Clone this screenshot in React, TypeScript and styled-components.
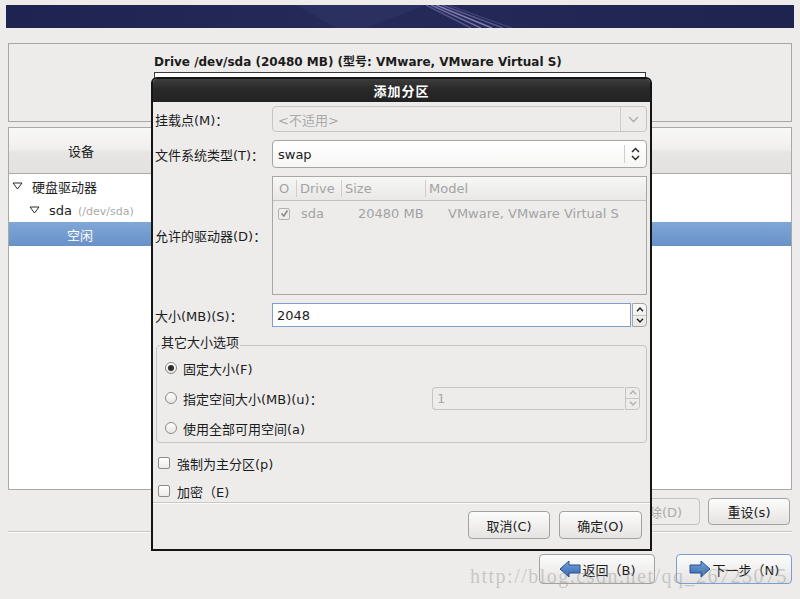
import React from 'react';
import styled, { createGlobalStyle } from 'styled-components';

const GlobalStyle = createGlobalStyle`
  html, body {
    margin: 0;
    padding: 0;
    background: #edeceb;
  }
  body {
    font-family: "DejaVu Sans", "Noto Sans CJK SC", sans-serif;
    font-size: 13px;
    color: #1c1c1c;
  }
  * {
    box-sizing: border-box;
  }
`;

const Page = styled.div`
  position: relative;
  width: 800px;
  height: 599px;
  overflow: hidden;
  padding: 5px 6px 0;
  display: flex;
  flex-direction: column;
`;

const BannerArt = styled.svg`
  display: block;
  flex-shrink: 0;
  width: 788px;
  height: 23px;
`;

const TopPanel = styled.div`
  margin: 15px 2px 0;
  height: 79px;
  border: 1px solid #a9a8a6;
  display: flex;
  justify-content: center;
  padding-top: 10px;
  overflow: hidden;
`;

const DriveBlock = styled.div`
  width: 492px;
  display: flex;
  flex-direction: column;
`;

const DriveTitle = styled.div`
  font-size: 12px;
  font-weight: bold;
  line-height: 16px;
  white-space: nowrap;
`;

const DriveBar = styled.div`
  margin-top: 2px;
  height: 38px;
  border: 1px solid #3a3a3a;
  background: #fff;
`;

const LowerPanel = styled.div`
  margin: 5px 2px 0;
  height: 363px;
  border: 1px solid #a9a8a6;
  background: #fff;
  display: flex;
  flex-direction: column;
`;

const TreeHeader = styled.div`
  height: 46px;
  flex-shrink: 0;
  display: flex;
  background: linear-gradient(#f8f8f7 0%, #f1f0ef 45%, #e6e5e3 55%, #e3e2e0 100%);
  border-bottom: 1px solid #a9a8a6;
`;

const HeaderCell = styled.div`
  width: 144px;
  display: flex;
  align-items: center;
  justify-content: center;
`;

const TreeRow = styled.div<{ $indent: number; $selected?: boolean }>`
  height: 24px;
  display: flex;
  align-items: center;
  gap: 9px;
  padding-left: ${(p) => p.$indent}px;
  color: ${(p) => (p.$selected ? '#fff' : '#1c1c1c')};
  background: ${(p) => (p.$selected ? 'linear-gradient(#80a7d7, #6891c8)' : 'transparent')};
`;

const Hint = styled.span`
  font-size: 11px;
  color: #a9a9a9;
  margin-left: 6px;
`;

const ActionRow = styled.div`
  margin-top: 8px;
  display: flex;
  justify-content: flex-end;
  gap: 8px;
  padding-right: 4px;
`;

const Button = styled.button<{ $w: number; $h: number; $focus?: boolean }>`
  width: ${(p) => p.$w}px;
  height: ${(p) => p.$h}px;
  padding: 0;
  display: flex;
  align-items: center;
  justify-content: center;
  gap: 2px;
  font: inherit;
  color: #1c1c1c;
  background: linear-gradient(#fcfcfc, #f1f0ef 50%, #e4e3e1);
  border: 1px solid ${(p) => (p.$focus ? '#7b9fd2' : '#a3a2a0')};
  border-radius: 4px;
  &:disabled {
    color: #acaba9;
    background: #edeceb;
    border-color: #c4c3c1;
  }
`;

const Separator = styled.div`
  height: 1px;
  flex-shrink: 0;
  background: #c9c8c6;
  box-shadow: 0 1px 0 #fafafa;
`;

const PageSeparator = styled(Separator)`
  margin: 6px 2px 0;
`;

const NavRow = styled.div`
  margin-top: 22px;
  display: flex;
  justify-content: flex-end;
  gap: 21px;
  padding-right: 2px;
`;

const Watermark = styled.div`
  position: absolute;
  left: 470px;
  top: 565px;
  font-family: "Liberation Serif", serif;
  font-size: 20px;
  letter-spacing: 1.5px;
  color: rgba(150, 150, 150, 0.45);
  pointer-events: none;
  white-space: nowrap;
`;

/* dialog */

const Dialog = styled.div`
  position: absolute;
  left: 151px;
  top: 77px;
  width: 501px;
  height: 474px;
  border: 2px solid #151515;
  border-radius: 6px 6px 0 0;
  background: #edeceb;
  display: flex;
  flex-direction: column;
`;

const TitleBar = styled.div`
  height: 23px;
  flex-shrink: 0;
  display: flex;
  align-items: center;
  justify-content: center;
  color: #fff;
  font-weight: bold;
  letter-spacing: 1px;
  border-radius: 4px 4px 0 0;
  background: linear-gradient(#3d3d3d, #2a2a2a 40%, #222);
`;

const Form = styled.div`
  padding: 4px 3px 0 2px;
  display: grid;
  grid-template-columns: 117px 375px;
  row-gap: 8px;
  align-items: center;
`;

const Label = styled.div`
  white-space: nowrap;
`;

const Combo = styled.div<{ $h: number; $disabled?: boolean }>`
  height: ${(p) => p.$h}px;
  display: flex;
  align-items: stretch;
  border: 1px solid ${(p) => (p.$disabled ? '#c6c5c3' : '#a6a5a3')};
  border-radius: 4px;
  color: ${(p) => (p.$disabled ? '#a9a9a9' : '#1c1c1c')};
  background: ${(p) => (p.$disabled ? '#edeceb' : 'linear-gradient(#ffffff, #f6f6f5)')};
  overflow: hidden;
`;

const ComboText = styled.div`
  flex: 1;
  display: flex;
  align-items: center;
  padding-left: 5px;
`;

const ComboButton = styled.div<{ $split?: boolean }>`
  width: ${(p) => (p.$split ? 26 : 22)}px;
  display: flex;
  align-items: center;
  justify-content: center;
  border-left: 1px solid #cfcecc;
  margin: ${(p) => (p.$split ? '0' : '4px 0')};
`;

const DriveTable = styled.div`
  height: 119px;
  border: 1px solid #a9a8a6;
  background: #edeceb;
  display: flex;
  flex-direction: column;
  color: #a3a3a3;
`;

const TableGrid = styled.div<{ $head?: boolean }>`
  display: grid;
  grid-template-columns: 23px 45px 84px 1fr;
  height: ${(p) => (p.$head ? 24 : 25)}px;
  align-items: center;
  background: ${(p) => (p.$head ? 'linear-gradient(#f7f7f6, #e9e8e6)' : 'transparent')};
  border-bottom: ${(p) => (p.$head ? '1px solid #c3c2c0' : 'none')};
`;

const HeadCell = styled.div<{ $sep?: boolean }>`
  height: 17px;
  line-height: 17px;
  padding-left: ${(p) => (p.$sep ? 3 : 6)}px;
  border-left: ${(p) => (p.$sep ? '1px solid #cfcecc' : 'none')};
`;

const Cell = styled.div<{ $pad: number }>`
  padding-left: ${(p) => p.$pad}px;
  white-space: nowrap;
  display: flex;
  align-items: center;
`;

const Spin = styled.div<{ $h: number; $w?: number }>`
  height: ${(p) => p.$h}px;
  width: ${(p) => (p.$w ? `${p.$w}px` : 'auto')};
  display: flex;
  gap: 1px;
`;

const SpinInput = styled.div<{ $disabled?: boolean }>`
  flex: 1;
  display: flex;
  align-items: center;
  padding-left: 4px;
  border: 1px solid ${(p) => (p.$disabled ? '#c6c5c3' : '#7f9dcf')};
  border-radius: ${(p) => (p.$disabled ? '4px 0 0 4px' : '0')};
  border-right: ${(p) => (p.$disabled ? 'none' : undefined)};
  background: ${(p) => (p.$disabled ? '#edeceb' : '#fff')};
  color: ${(p) => (p.$disabled ? '#a9a9a9' : '#1c1c1c')};
`;

const SpinButtons = styled.div<{ $disabled?: boolean }>`
  width: 15px;
  display: flex;
  flex-direction: column;
  border: 1px solid ${(p) => (p.$disabled ? '#c6c5c3' : '#a6a5a3')};
  border-radius: 0 4px 4px 0;
  background: ${(p) => (p.$disabled ? '#edeceb' : 'linear-gradient(#fafafa, #e8e7e5)')};
  overflow: hidden;
`;

const SpinHalf = styled.div<{ $top?: boolean }>`
  flex: 1;
  display: flex;
  align-items: center;
  justify-content: center;
  border-bottom: ${(p) => (p.$top ? '1px solid #c6c5c3' : 'none')};
`;

const Frame = styled.fieldset`
  grid-column: 1 / -1;
  margin: 0 0 0 1px;
  padding: 0 6px 1px 8px;
  min-width: 0;
  border: 1px solid #c6c5c3;
  border-radius: 4px;
  display: flex;
  flex-direction: column;
  gap: 4px;
`;

const Legend = styled.legend`
  padding: 0 1px 4px;
  margin-left: -5px;
  line-height: 16px;
`;

const OptionRow = styled.div`
  height: 26px;
  display: flex;
  align-items: center;
  gap: 6px;
`;

const RadioDot = styled.span<{ $checked?: boolean }>`
  width: 12px;
  height: 12px;
  border-radius: 50%;
  border: 1px solid #8c8b89;
  background: linear-gradient(#ffffff, #e6e5e3);
  display: flex;
  align-items: center;
  justify-content: center;
  &::after {
    content: '';
    display: ${(p) => (p.$checked ? 'block' : 'none')};
    width: 6px;
    height: 6px;
    border-radius: 50%;
    background: #2e2e2e;
  }
`;

const Push = styled.div`
  margin-left: auto;
`;

const Options = styled.div`
  margin-top: 9px;
  padding-left: 5px;
  display: flex;
  flex-direction: column;
  gap: 6px;
`;

const CheckRow = styled.div`
  height: 22px;
  display: flex;
  align-items: center;
  gap: 7px;
`;

const Box = styled.span<{ $muted?: boolean }>`
  width: 12px;
  height: 12px;
  border: 1px solid ${(p) => (p.$muted ? '#b4b3b1' : '#8c8b89')};
  border-radius: 2px;
  background: ${(p) => (p.$muted ? '#edeceb' : 'linear-gradient(#ffffff, #ecebea)')};
  display: flex;
  align-items: center;
  justify-content: center;
`;

const DialogFoot = styled.div`
  margin-top: auto;
`;

const DialogButtons = styled.div`
  padding: 8px 8px 11px;
  display: flex;
  justify-content: flex-end;
  gap: 9px;
`;

const Triangle = () => (
  <svg width="11" height="8" viewBox="0 0 11 8">
    <polygon points="1,1 10,1 5.5,7" fill="#fff" stroke="#2a2a2a" strokeWidth="1" />
  </svg>
);

const ChevronDown = () => (
  <svg width="11" height="7" viewBox="0 0 11 7">
    <polyline points="1,1 5.5,5.5 10,1" fill="none" stroke="#aaa" strokeWidth="1.3" />
  </svg>
);

const UpDown = () => (
  <svg width="9" height="14" viewBox="0 0 9 14">
    <polyline points="1,5 4.5,1.5 8,5" fill="none" stroke="#222" strokeWidth="1.4" />
    <polyline points="1,9 4.5,12.5 8,9" fill="none" stroke="#222" strokeWidth="1.4" />
  </svg>
);

const Caret = ({ up, color }: { up?: boolean; color: string }) => (
  <svg width="8" height="5" viewBox="0 0 8 5">
    <polyline
      points={up ? '1,4.2 4,1 7,4.2' : '1,0.8 4,4 7,0.8'}
      fill="none"
      stroke={color}
      strokeWidth="1.4"
    />
  </svg>
);

const Tick = () => (
  <svg width="9" height="9" viewBox="0 0 9 9">
    <polyline points="1.5,4.5 3.8,7 7.5,1.5" fill="none" stroke="#8a8a8a" strokeWidth="1.6" />
  </svg>
);

const Arrow = ({ dir }: { dir: 'left' | 'right' }) => (
  <svg width="22" height="18" viewBox="0 0 22 18">
    <defs>
      <linearGradient id={`ag-${dir}`} x1="0" y1="0" x2="0" y2="1">
        <stop offset="0" stopColor="#7aa5dc" />
        <stop offset="1" stopColor="#2f63ab" />
      </linearGradient>
    </defs>
    <polygon
      points={
        dir === 'left'
          ? '1,9 10,1 10,5 21,5 21,13 10,13 10,17'
          : '21,9 12,1 12,5 1,5 1,13 12,13 12,17'
      }
      fill={`url(#ag-${dir})`}
      stroke="#24508e"
      strokeWidth="1"
      strokeLinejoin="round"
    />
  </svg>
);

const Banner = () => (
  <BannerArt viewBox="0 0 788 23">
    <defs>
      <linearGradient id="bn" x1="0" y1="0" x2="1" y2="0">
        <stop offset="0" stopColor="#1f2350" />
        <stop offset="0.45" stopColor="#252a59" />
        <stop offset="1" stopColor="#1f234f" />
      </linearGradient>
    </defs>
    <rect width="788" height="23" fill="url(#bn)" />
    <polygon points="290,0 420,0 360,23 330,23" fill="#5a5f95" opacity="0.12" />
    <line x1="420" y1="0" x2="465" y2="23" stroke="#8d88c0" strokeWidth="1.5" opacity="0.45" />
    <line x1="425" y1="0" x2="475" y2="23" stroke="#a59ed4" strokeWidth="1.5" opacity="0.6" />
    <line x1="430" y1="0" x2="486" y2="23" stroke="#b3abe0" strokeWidth="1.6" opacity="0.65" />
    <line x1="436" y1="0" x2="497" y2="23" stroke="#8f88c4" strokeWidth="1.4" opacity="0.5" />
    <line x1="442" y1="0" x2="506" y2="23" stroke="#6f6aa6" strokeWidth="1.2" opacity="0.4" />
  </BannerArt>
);

const App = () => (
  <Page>
    <GlobalStyle />
    <Banner />

    <TopPanel>
      <DriveBlock>
        <DriveTitle>Drive /dev/sda (20480 MB) (型号: VMware, VMware Virtual S)</DriveTitle>
        <DriveBar />
      </DriveBlock>
    </TopPanel>

    <LowerPanel>
      <TreeHeader>
        <HeaderCell>设备</HeaderCell>
      </TreeHeader>
      <TreeRow $indent={3}>
        <Triangle />
        <span>硬盘驱动器</span>
      </TreeRow>
      <TreeRow $indent={20}>
        <Triangle />
        <span>
          sda<Hint>(/dev/sda)</Hint>
        </span>
      </TreeRow>
      <TreeRow $indent={58} $selected>
        <span>空闲</span>
      </TreeRow>
    </LowerPanel>

    <ActionRow>
      <Button $w={82} $h={27}>创建(C)</Button>
      <Button $w={82} $h={27} disabled>编辑(E)</Button>
      <Button $w={82} $h={27} disabled>删除(D)</Button>
      <Button $w={82} $h={27}>重设(s)</Button>
    </ActionRow>

    <PageSeparator />

    <NavRow>
      <Button $w={116} $h={30}>
        <Arrow dir="left" />
        <span>返回（B)</span>
      </Button>
      <Button $w={116} $h={30} $focus>
        <Arrow dir="right" />
        <span>下一步（N)</span>
      </Button>
    </NavRow>

    <Watermark>http://blog.csdn.net/qq_26725075</Watermark>

    <Dialog>
      <TitleBar>添加分区</TitleBar>
      <Form>
        <Label>挂载点(M)：</Label>
        <Combo $h={26} $disabled>
          <ComboText>&lt;不适用&gt;</ComboText>
          <ComboButton $split>
            <ChevronDown />
          </ComboButton>
        </Combo>

        <Label>文件系统类型(T)：</Label>
        <Combo $h={28}>
          <ComboText>swap</ComboText>
          <ComboButton>
            <UpDown />
          </ComboButton>
        </Combo>

        <Label>允许的驱动器(D)：</Label>
        <DriveTable>
          <TableGrid $head>
            <HeadCell>O</HeadCell>
            <HeadCell $sep>Drive</HeadCell>
            <HeadCell $sep>Size</HeadCell>
            <HeadCell $sep>Model</HeadCell>
          </TableGrid>
          <TableGrid>
            <Cell $pad={5}>
              <Box $muted>
                <Tick />
              </Box>
            </Cell>
            <Cell $pad={5}>sda</Cell>
            <Cell $pad={17}>20480 MB</Cell>
            <Cell $pad={23}>VMware, VMware Virtual S</Cell>
          </TableGrid>
        </DriveTable>

        <Label>大小(MB)(S)：</Label>
        <Spin $h={24}>
          <SpinInput>2048</SpinInput>
          <SpinButtons>
            <SpinHalf $top>
              <Caret up color="#222" />
            </SpinHalf>
            <SpinHalf>
              <Caret color="#222" />
            </SpinHalf>
          </SpinButtons>
        </Spin>

        <Frame>
          <Legend>其它大小选项</Legend>
          <OptionRow>
            <RadioDot $checked />
            <span>固定大小(F)</span>
          </OptionRow>
          <OptionRow>
            <RadioDot />
            <span>指定空间大小(MB)(u)：</span>
            <Push>
              <Spin $h={23} $w={208}>
                <SpinInput $disabled>1</SpinInput>
                <SpinButtons $disabled>
                  <SpinHalf $top>
                    <Caret up color="#b0b0b0" />
                  </SpinHalf>
                  <SpinHalf>
                    <Caret color="#b0b0b0" />
                  </SpinHalf>
                </SpinButtons>
              </Spin>
            </Push>
          </OptionRow>
          <OptionRow>
            <RadioDot />
            <span>使用全部可用空间(a)</span>
          </OptionRow>
        </Frame>
      </Form>

      <Options>
        <CheckRow>
          <Box />
          <span>強制为主分区(p)</span>
        </CheckRow>
        <CheckRow>
          <Box />
          <span>加密（E)</span>
        </CheckRow>
      </Options>

      <DialogFoot>
        <Separator />
        <DialogButtons>
          <Button $w={82} $h={28}>取消(C)</Button>
          <Button $w={83} $h={28}>确定(O)</Button>
        </DialogButtons>
      </DialogFoot>
    </Dialog>
  </Page>
);

export default App;
